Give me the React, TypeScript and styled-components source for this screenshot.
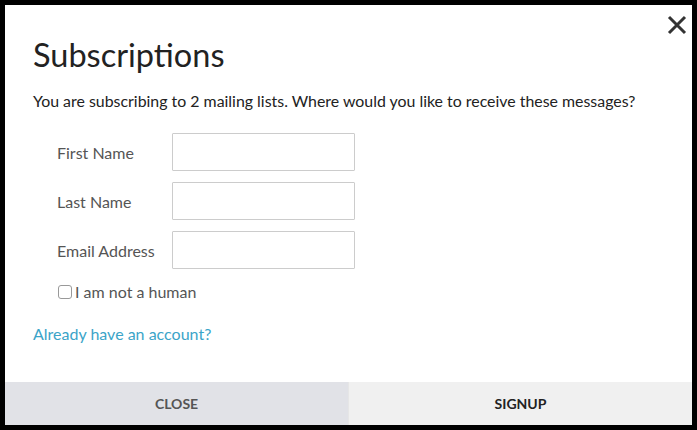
import React from 'react';
import styled, { createGlobalStyle } from 'styled-components';

const GlobalStyle = createGlobalStyle`
  html, body {
    margin: 0;
    padding: 0;
    background: #000;
  }
  body {
    font-family: Lato, "Open Sans", sans-serif;
  }
`;

const Page = styled.div`
  width: 697px;
  height: 430px;
  padding: 5px;
  box-sizing: border-box;
  background: #000;
`;

const Modal = styled.div`
  position: relative;
  width: 687px;
  height: 420px;
  background: #fff;
  display: flex;
  flex-direction: column;
`;

const CloseIcon = styled.button`
  position: absolute;
  top: 8px;
  right: 3px;
  width: 24px;
  height: 24px;
  padding: 0;
  border: none;
  background: none;
  display: flex;
  align-items: center;
  justify-content: center;
`;

const Body = styled.div`
  flex: 1;
  padding: 30px 28px 0 28px;
`;

const Title = styled.h1`
  margin: 0;
  font-size: 32.5px;
  font-weight: 400;
  line-height: 40px;
  color: #222;
`;

const Intro = styled.p`
  margin: 16px 0 22px;
  font-size: 15.9px;
  line-height: 20px;
  color: #222;
`;

const Form = styled.div`
  display: flex;
  flex-direction: column;
  gap: 11px;
  padding-left: 24px;
`;

const Row = styled.div`
  display: flex;
  align-items: center;
`;

const Label = styled.label`
  width: 115px;
  font-size: 16px;
  color: #555;
`;

const Input = styled.input`
  width: 183px;
  height: 38px;
  box-sizing: border-box;
  border: 1px solid #ccc;
  border-radius: 1px;
  background: #fff;
`;

const CheckRow = styled.label`
  display: flex;
  align-items: center;
  margin-top: 13px;
  padding-left: 25px;
  font-size: 16px;
  color: #555;
`;

const Box = styled.span`
  width: 12px;
  height: 12px;
  border: 1px solid #999;
  border-radius: 3px;
  margin-right: 3px;
`;

const Link = styled.a`
  display: inline-block;
  margin-top: 23px;
  font-size: 16px;
  color: #3ba4c8;
  text-decoration: none;
`;

const Footer = styled.div`
  display: flex;
  height: 43px;
`;

const FooterButton = styled.button<{ $primary?: boolean }>`
  flex: 1 1 0;
  border: none;
  margin: 0;
  padding: 0;
  font-family: Lato, "Open Sans", sans-serif;
  font-size: 14px;
  font-weight: 700;
  color: ${(p) => (p.$primary ? '#222' : '#555')};
  background: ${(p) => (p.$primary ? '#f0f0f0' : '#e1e2e7')};
  border-left: ${(p) => (p.$primary ? '1px solid #e6e6e6' : 'none')};
`;

const fields = ['First Name', 'Last Name', 'Email Address'];

export default function App() {
  return (
    <Page>
      <GlobalStyle />
      <Modal>
        <CloseIcon aria-label="Close">
          <svg width="20" height="20" viewBox="0 0 20 20">
            <path d="M2 2L18 18M18 2L2 18" stroke="#333" strokeWidth="3" />
          </svg>
        </CloseIcon>
        <Body>
          <Title>Subscriptions</Title>
          <Intro>
            You are subscribing to 2 mailing lists. Where would you like to receive these messages?
          </Intro>
          <Form>
            {fields.map((f) => (
              <Row key={f}>
                <Label>{f}</Label>
                <Input type="text" />
              </Row>
            ))}
          </Form>
          <CheckRow>
            <Box />I am not a human
          </CheckRow>
          <Link href="#">Already have an account?</Link>
        </Body>
        <Footer>
          <FooterButton>CLOSE</FooterButton>
          <FooterButton $primary>SIGNUP</FooterButton>
        </Footer>
      </Modal>
    </Page>
  );
}
